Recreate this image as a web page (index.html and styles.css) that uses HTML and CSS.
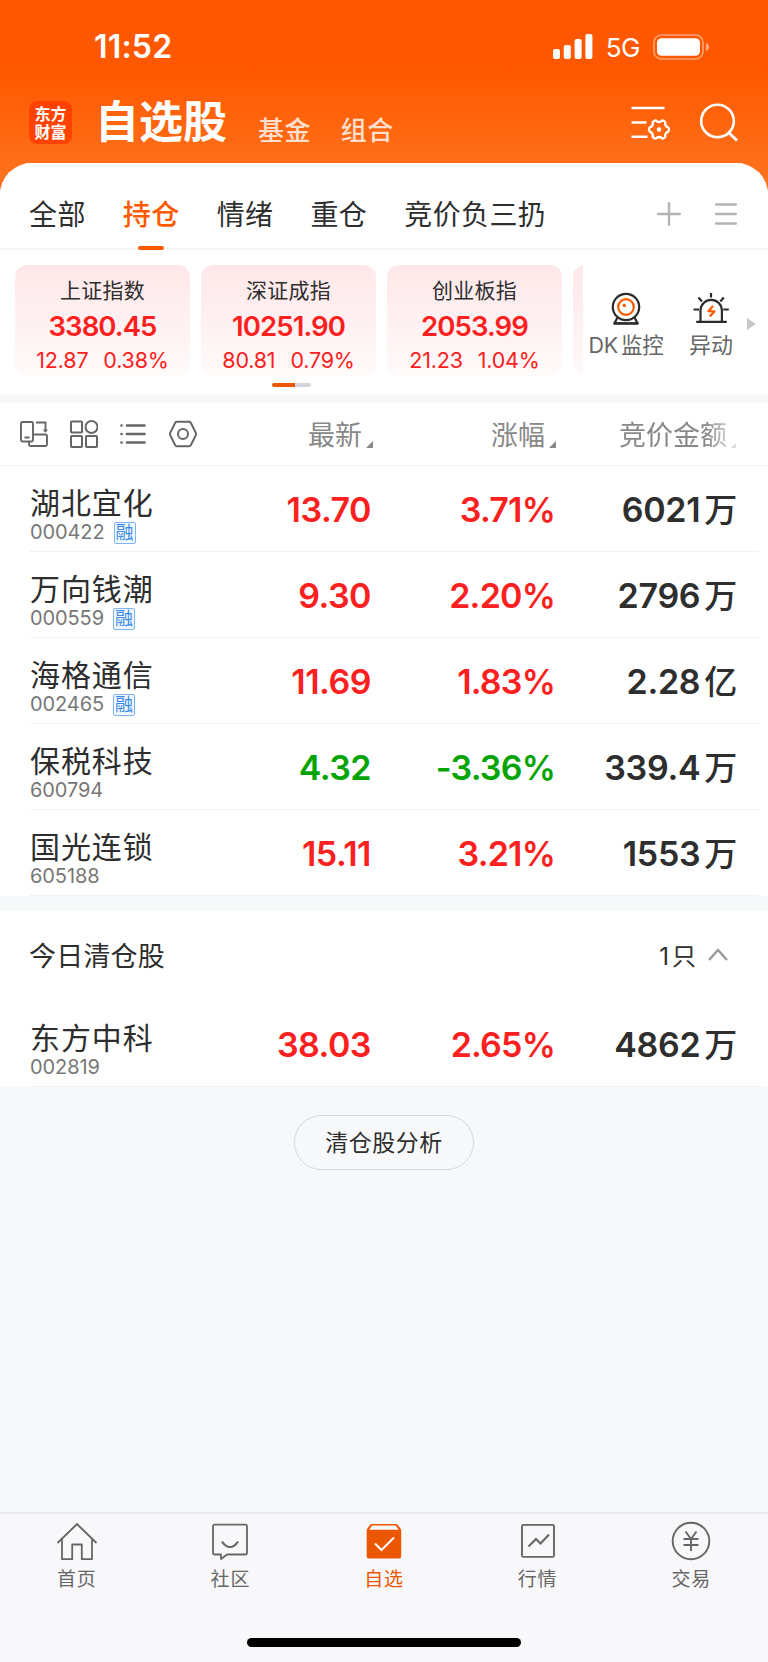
FILE: index.html
```html
<!DOCTYPE html>
<html lang="zh-CN">
<head>
  <meta charset="UTF-8">
  <meta name="viewport" content="width=device-width, initial-scale=1.0">
  <title>自选股</title>
  <link rel="stylesheet" href="styles.css">
</head>
<body>
  <header>
    <div class="status-bar">
      <span class="time">11:52</span>
      <div class="status-icons">
        <svg width="40" height="26" viewBox="0 0 40 26" fill="#fff">
          <rect x="0" y="15" width="7" height="10" rx="2"/>
          <rect x="10.8" y="11" width="7" height="14" rx="2"/>
          <rect x="21.6" y="5" width="7" height="20" rx="2"/>
          <rect x="32.4" y="0" width="7" height="25" rx="2"/>
        </svg>
        <span class="network">5G</span>
        <svg width="57" height="26" viewBox="0 0 57 26">
          <rect x="1" y="1" width="49" height="24" rx="7.5" fill="none" stroke="#fff" stroke-opacity=".45" stroke-width="1.6"/>
          <rect x="4" y="4.300" width="43" height="17.500" rx="4.500" fill="#fff"/>
          <path d="M53 9q3 1 3 4t-3 4z" fill="#fff" fill-opacity=".5"/>
        </svg>
      </div>
    </div>
    <div class="title-bar">
      <div class="logo"><span>东方</span><span>财富</span></div>
      <h1 class="title">自选股</h1>
      <a class="sub-title">基金</a>
      <a class="sub-title">组合</a>
      <div class="header-buttons">
        <svg width="39" height="36" viewBox="0 0 39 36" fill="none" stroke="#fff" stroke-width="2.600">
          <path d="M.5 4h33M.5 18.500h15M.5 32.700h16"/>
          <path d="M23.500 16.800q1.300-.8 2.200.4 2.300 1.600 4.600 0 .9-1.200 2.200-.4l1.300.8q.9.700.4 2 .2 2.800 2.600 3.600 1.100.4 1.100 2.300t-1.100 2.300q-2.400.8-2.600 3.600.5 1.300-.4 2l-1.300.8q-1.300.8-2.200-.4-2.300-1.600-4.600 0-.9 1.200-2.200.4l-1.300-.8q-.9-.7-.4-2-.2-2.800-2.600-3.600-1.100-.4-1.100-2.300t1.100-2.300q2.400-.8 2.600-3.600-.5-1.300.4-2z" stroke-width="2.300"/>
          <circle cx="28" cy="25.500" r="2.300" fill="#fff" stroke="none"/>
        </svg>
        <svg width="40" height="40" viewBox="0 0 40 40" fill="none" stroke="#fff" stroke-width="2.600">
          <circle cx="18.500" cy="19" r="16.300"/>
          <path d="M29.500 30.500l8.500 8" stroke-width="3"/>
        </svg>
      </div>
    </div>
  </header>

  <main>
    <nav class="tabs">
      <a class="tab">全部</a>
      <a class="tab active">持仓</a>
      <a class="tab">情绪</a>
      <a class="tab">重仓</a>
      <a class="tab">竞价负三扔</a>
      <div class="tab-buttons">
        <svg width="24" height="24" viewBox="0 0 24 24" stroke="#b3b3b3" stroke-width="2.400" stroke-linecap="round"><path d="M12 1.200v21.600M1.200 12h21.600"/></svg>
        <svg width="22" height="24" viewBox="0 0 22 24" stroke="#b3b3b3" stroke-width="2.400" stroke-linecap="round"><path d="M1.200 2.500h19.600M1.200 12h19.600M1.200 21.500h19.600"/></svg>
      </div>
    </nav>

    <section class="market">
      <div class="index-list">
        <div class="index-card">
          <div class="index-name">上证指数</div>
          <div class="index-value">3380.45</div>
          <div class="index-change"><span>12.87</span><span>0.38%</span></div>
        </div>
        <div class="index-card">
          <div class="index-name">深证成指</div>
          <div class="index-value">10251.90</div>
          <div class="index-change"><span>80.81</span><span>0.79%</span></div>
        </div>
        <div class="index-card">
          <div class="index-name">创业板指</div>
          <div class="index-value">2053.99</div>
          <div class="index-change"><span>21.23</span><span>1.04%</span></div>
        </div>
        <div class="index-card"></div>
      </div>
      <div class="tools">
        <div class="tool tool-dk">
          <svg width="36" height="34" viewBox="0 0 36 34" fill="none" stroke="#2b2b2b" stroke-width="2.200">
            <circle cx="18" cy="15" r="13.200"/>
            <path d="M9.500 25.500l-3 5.800h23l-3-5.800" stroke-linejoin="round"/>
            <path d="M5.500 31.500h25"/>
            <circle cx="18" cy="15" r="7.800" stroke="#ff5a00"/>
            <circle cx="16.300" cy="13.500" r="1.700" fill="#ff5a00" stroke="none"/>
          </svg>
          <span>DK 监控</span>
        </div>
        <div class="tool tool-move">
          <svg width="36" height="34" viewBox="0 0 36 34" fill="none" stroke="#2b2b2b" stroke-width="2.200">
            <path d="M7.500 29.500V18.500a10.700 10.700 0 0 1 21.400 0v11"/>
            <path d="M4 29.800h29" stroke-linecap="round"/>
            <path d="M18 5.500V1M9 9.500L5.500 5.500M27.300 9.500l3.500-4M6 17.500H.5M30.300 17.500h5.500"/>
            <path d="M20 14l-4.600 5.200 6 .2-4.600 5.200" stroke="#ff5a00" stroke-linejoin="round"/>
          </svg>
          <span>异动</span>
        </div>
        <span class="more-arrow"></span>
      </div>
      <div class="pager"><span></span></div>
    </section>

    <section class="stocks">
      <div class="list-header">
        <div class="view-buttons">
          <svg width="28" height="28" viewBox="0 0 28 28" fill="none" stroke="#666" stroke-width="1.900">
            <rect x="1" y="2" width="12" height="19.500" rx="1.500"/>
            <path d="M4.500 17.500h5M16 2.500h9.500v9M13 14.500h12.500a1.500 1.500 0 0 1 1.500 1.500v8.500a1.500 1.500 0 0 1-1.500 1.500h-15A1.500 1.500 0 0 1 9 24.500v-3"/>
            <path d="M22.800 9.500h5.200l-2.600 3.300z" fill="#666" stroke="none"/>
          </svg>
          <svg width="28" height="28" viewBox="0 0 28 28" fill="none" stroke="#666" stroke-width="2">
            <rect x="1" y="1.500" width="11" height="11" rx=".8"/>
            <circle cx="21.500" cy="7" r="6"/>
            <rect x="1" y="16" width="11" height="11" rx=".8"/>
            <rect x="16" y="16" width="11" height="11" rx=".8"/>
          </svg>
          <svg width="28" height="28" viewBox="0 0 28 28" fill="none" stroke="#666" stroke-width="2.600" stroke-linecap="round">
            <path d="M8 5.500h17.500M8 14h17.500M8 22.500h17.500M2.500 5.500h.1M2.500 14h.1M2.500 22.500h.1"/>
          </svg>
          <svg width="28" height="28" viewBox="0 0 28 28" fill="none" stroke="#666" stroke-width="2">
            <path d="M8 1.800h12q1.200 0 1.800 1l5 10q.5 1.200 0 2.400l-5 10q-.6 1-1.800 1H8q-1.200 0-1.800-1l-5-10q-.5-1.200 0-2.400l5-10q.6-1 1.800-1z"/>
            <circle cx="14" cy="14" r="5"/>
          </svg>
        </div>
        <div class="col col-price">最新<i class="sort"></i></div>
        <div class="col col-rate">涨幅<i class="sort"></i></div>
        <div class="col col-amount fade">竞价金额<i class="sort"></i></div>
      </div>

      <div class="stock">
        <div class="stock-info">
          <div class="stock-name">湖北宜化</div>
          <div class="stock-code">000422<span class="tag">融</span></div>
        </div>
        <div class="col-price up">13.70</div>
        <div class="col-rate up">3.71%</div>
        <div class="col-amount">6021<span class="unit">万</span></div>
      </div>
      <div class="stock">
        <div class="stock-info">
          <div class="stock-name">万向钱潮</div>
          <div class="stock-code">000559<span class="tag">融</span></div>
        </div>
        <div class="col-price up">9.30</div>
        <div class="col-rate up">2.20%</div>
        <div class="col-amount">2796<span class="unit">万</span></div>
      </div>
      <div class="stock">
        <div class="stock-info">
          <div class="stock-name">海格通信</div>
          <div class="stock-code">002465<span class="tag">融</span></div>
        </div>
        <div class="col-price up">11.69</div>
        <div class="col-rate up">1.83%</div>
        <div class="col-amount">2.28<span class="unit">亿</span></div>
      </div>
      <div class="stock">
        <div class="stock-info">
          <div class="stock-name">保税科技</div>
          <div class="stock-code">600794</div>
        </div>
        <div class="col-price down">4.32</div>
        <div class="col-rate down">-3.36%</div>
        <div class="col-amount">339.4<span class="unit">万</span></div>
      </div>
      <div class="stock">
        <div class="stock-info">
          <div class="stock-name">国光连锁</div>
          <div class="stock-code">605188</div>
        </div>
        <div class="col-price up">15.11</div>
        <div class="col-rate up">3.21%</div>
        <div class="col-amount">1553<span class="unit">万</span></div>
      </div>
    </section>

    <section class="cleared">
      <div class="cleared-header">
        <h2>今日清仓股</h2>
        <span class="count">1<span>只</span></span>
        <svg width="20" height="13" viewBox="0 0 20 13" fill="none" stroke="#999" stroke-width="2.400"><path d="M1 12l9-10 9 10"/></svg>
      </div>
      <div class="stock">
        <div class="stock-info">
          <div class="stock-name">东方中科</div>
          <div class="stock-code">002819</div>
        </div>
        <div class="col-price up">38.03</div>
        <div class="col-rate up">2.65%</div>
        <div class="col-amount">4862<span class="unit">万</span></div>
      </div>
    </section>

    <div class="analysis">
      <button class="analysis-button">清仓股分析</button>
    </div>
  </main>

  <footer>
    <nav class="bottom-nav">
      <a class="nav-item">
        <svg width="42" height="40" viewBox="0 0 42 40" fill="none" stroke="#666" stroke-width="1.800" stroke-linejoin="round">
          <path d="M1.500 22L21 3l19.500 19M6 18v20.200h10.200V23.500h9.600v14.700H36V18"/>
        </svg>
        <span>首页</span>
      </a>
      <a class="nav-item">
        <svg width="42" height="40" viewBox="0 0 42 40" fill="none" stroke="#666" stroke-width="1.800" stroke-linejoin="round">
          <path d="M5.500 3.700h31a1.500 1.500 0 0 1 1.500 1.500V32a1.500 1.500 0 0 1-1.500 1.500H18L12 38v-4.500H5.500A1.500 1.500 0 0 1 4 32V5.200a1.500 1.500 0 0 1 1.500-1.500z"/>
          <path d="M13 20.500q3.500 5.500 8 5.500t8-5.500" stroke-width="2.200"/>
        </svg>
        <span>社区</span>
      </a>
      <a class="nav-item active">
        <svg width="42" height="40" viewBox="0 0 42 40">
          <path d="M8.500 3h24.500q1 0 1.600.8l3 4q.6.800.6 1.800V35q0 2.500-2.500 2.500H6.200q-2.500 0-2.500-2.500V9.600q0-1 .6-1.800l2.800-4q.6-.8 1.400-.8z" fill="#eb5600"/>
          <path d="M9 4.500h23.700l3 4.200H6.200z" fill="#f8f8fa"/>
          <path d="M12 22.500l6.500 6.500 12.500-12.500" fill="none" stroke="#fff" stroke-width="2"/>
        </svg>
        <span>自选</span>
      </a>
      <a class="nav-item">
        <svg width="42" height="40" viewBox="0 0 42 40" fill="none" stroke="#666" stroke-width="1.900">
          <rect x="5" y="3.900" width="32" height="32" rx="1.500"/>
          <path d="M11.500 25.500l7.500-7.500 4.500 4.500 8.500-9" stroke-width="2.100"/>
        </svg>
        <span>行情</span>
      </a>
      <a class="nav-item">
        <svg width="42" height="40" viewBox="0 0 42 40" fill="none" stroke="#666" stroke-width="1.900">
          <circle cx="21" cy="20" r="18.300"/>
          <path d="M15.500 10.500l5.500 7.500 5.500-7.500M21 18v12M13.500 18h15M13.500 24h15"/>
        </svg>
        <span>交易</span>
      </a>
    </nav>
    <div class="home-bar"></div>
  </footer>
</body>
</html>
```

FILE: styles.css
```css
* {
  box-sizing: border-box;
}

body {
  margin: 0;
  width: 768px;
  height: 1662px;
  display: flex;
  flex-direction: column;
  overflow: hidden;
  background: linear-gradient(#ff5800 0, #ff5800 70px, #ff711c 175px, #ff7520 205px, #f7f8fa 205px);
  color: #2e2e2e;
  font-family: Inter, "Noto Sans CJK SC", sans-serif;
}

h1, h2 {
  margin: 0;
  font-weight: normal;
}

svg {
  display: block;
  flex: none;
}

header {
  height: 163px;
  color: #fff;
}

.status-bar {
  height: 83px;
  padding: 10px 58px 0 94px;
  display: flex;
  align-items: center;
  justify-content: space-between;
}

.time {
  font-size: 32px;
  font-weight: 600;
  letter-spacing: 0.2px;
}

.status-icons {
  display: flex;
  align-items: center;
}

.network {
  margin: 3px 13px 0 13px;
  font-size: 26px;
  font-weight: 400;
  line-height: 26px;
  letter-spacing: -0.5px;
}

.title-bar {
  height: 80px;
  padding: 0 29px 0 29px;
  display: flex;
  align-items: center;
}

.logo {
  width: 43px;
  height: 43px;
  margin-top: -1px;
  border-radius: 8px;
  background: #ff4200;
  display: flex;
  flex-direction: column;
  align-items: center;
  justify-content: center;
  font-size: 16px;
  font-weight: 700;
  line-height: 18px;
}

.title {
  margin: -3px 0 0 23px;
  font-size: 44px;
  font-weight: 700;
  line-height: 60px;
}

.sub-title {
  margin: 15px 0 0 31px;
  font-size: 26px;
  font-weight: 500;
  line-height: 36px;
  letter-spacing: 0.4px;
  color: #ffdfcd;
}

.sub-title + .sub-title {
  margin-left: 30px;
}

.header-buttons {
  margin: -2px 0 0 auto;
  display: flex;
  align-items: center;
  gap: 29px;
}

main {
  flex: 1;
  border-radius: 32px 32px 0 0;
  overflow: hidden;
  background: #f7f8fa;
}

.tabs {
  height: 87px;
  padding: 0 31px 0 29px;
  display: flex;
  gap: 37px;
  border-bottom: 2px solid #f5f5f6;
  background: #fff;
}

.tab {
  height: 87px;
  padding-top: 29px;
  display: flex;
  flex-direction: column;
  align-items: center;
  justify-content: space-between;
  font-size: 28px;
  line-height: 46px;
  letter-spacing: 0.4px;
}

.tab.active {
  color: #ff5a00;
  font-weight: 500;
}

.tab.active::after {
  content: "";
  width: 26px;
  height: 4px;
  border-radius: 2px;
  background: #ff5a00;
}

.tab-buttons {
  margin-left: auto;
  padding-top: 17px;
  display: flex;
  align-items: center;
  gap: 34px;
}

.market {
  height: 144px;
  padding: 15px 0 0 15px;
  display: grid;
  grid-template-columns: 568px 1fr;
  grid-template-rows: 111px 1fr;
  background: #fff;
}

.index-list {
  display: flex;
  gap: 11px;
  overflow: hidden;
}

.index-card {
  flex: none;
  width: 175px;
  height: 111px;
  padding-top: 11px;
  border-radius: 12px;
  background: linear-gradient(#ffe7e9, #fffafa);
  text-align: center;
  color: #fc2020;
}

.index-name {
  font-size: 21px;
  line-height: 30px;
  letter-spacing: 0.3px;
}

.index-name {
  color: #2e2e2e;
}

.index-value {
  margin-top: 4px;
  font-size: 27.5px;
  font-weight: 600;
  line-height: 32px;
  letter-spacing: -0.9px;
}

.index-change {
  margin-top: 4px;
  display: flex;
  justify-content: center;
  gap: 15px;
  font-size: 21.5px;
  line-height: 28px;
  letter-spacing: -0.2px;
}

.tools {
  display: flex;
  padding-top: 27px;
}

.tool {
  width: 84px;
  display: flex;
  flex-direction: column;
  align-items: center;
  gap: 3px;
  font-size: 22px;
  line-height: 32px;
  white-space: nowrap;
  color: #666;
}

.tool-dk {
  font-size: 21.5px;
  letter-spacing: -0.2px;
  word-spacing: -3px;
}

.tool-dk,
.tool-move {
  margin-left: 1px;
}

.more-arrow {
  margin: 26px 0 0 -6px;
  height: 12px;
  border-left: 9px solid #c8c8c8;
  border-top: 6px solid transparent;
  border-bottom: 6px solid transparent;
}

.pager {
  width: 39px;
  height: 4px;
  margin: 7px 0 0 257px;
  border-radius: 2px;
  overflow: hidden;
  background: #d3d5db;
}

.pager span {
  display: block;
  width: 23px;
  height: 4px;
  background: #eb5600;
}

.stocks {
  margin-top: 9px;
  background: #fff;
}

.list-header {
  height: 63px;
  padding-left: 20px;
  display: flex;
  align-items: center;
  border-bottom: 1px solid #f1f1f2;
}

.view-buttons {
  width: 200px;
  display: flex;
  gap: 21.5px;
}

.col {
  padding-top: 3px;
  display: flex;
  justify-content: flex-end;
  align-items: center;
  font-size: 27px;
  line-height: 40px;
  color: #888;
}

.sort {
  margin: 17px -2px 0 4px;
  border-left: 7px solid transparent;
  border-bottom: 7px solid #888;
}

.col-price {
  width: 151px;
}

.col-rate {
  width: 183px;
}

.col-amount {
  width: 182px;
}

.fade {
  -webkit-mask-image: linear-gradient(to right, #000 83%, rgba(0, 0, 0, 0.25) 100%);
  mask-image: linear-gradient(to right, #000 83%, rgba(0, 0, 0, 0.25) 100%);
}

.stock {
  height: 86px;
  margin: 0 9px 0 30px;
  display: flex;
  border-bottom: 1px solid #f1f1f2;
  line-height: 87px;
  font-size: 34px;
  font-weight: 600;
  letter-spacing: -0.5px;
  text-align: right;
}

.stock .col-rate {
  width: 184px;
  letter-spacing: -0.8px;
}

.stock .col-amount {
  letter-spacing: -0.3px;
}

.stock-info {
  width: 190px;
  padding-top: 16px;
  text-align: left;
  font-weight: 400;
}

.stock-name {
  font-size: 30px;
  line-height: 42px;
  letter-spacing: 0.9px;
}

.stock-code {
  height: 17px;
  display: flex;
  align-items: center;
  font-size: 20px;
  line-height: 17px;
  letter-spacing: -0.1px;
  color: #777;
}

.tag {
  width: 22px;
  height: 22px;
  margin-left: 9px;
  border: 1.5px solid #7fb4f0;
  border-radius: 2px;
  background: #f2f8ff;
  font-size: 18px;
  line-height: 20px;
  letter-spacing: 0;
  text-align: center;
  color: #3b8be6;
}

.unit {
  margin-left: 4px;
  font-size: 33px;
  font-weight: 500;
  line-height: 1;
}

.up {
  color: #fc2020;
}

.down {
  color: #04a404;
}

.cleared {
  margin-top: 15px;
  background: #fff;
}

.cleared-header {
  height: 90px;
  padding: 0 40px 4px 29px;
  display: flex;
  align-items: center;
}

.cleared-header h2 {
  flex: 1;
  font-size: 27px;
  letter-spacing: 0.2px;
}

.count {
  margin-right: 12px;
  font-size: 24px;
}

.count span {
  margin-left: 3px;
}

.analysis {
  padding-top: 28px;
  text-align: center;
}

.analysis-button {
  width: 180px;
  height: 55px;
  padding: 0 0 4px;
  border: 1.5px solid #d6d7d9;
  border-radius: 28px;
  background: transparent;
  color: #2e2e2e;
  font-family: inherit;
  font-size: 23px;
  letter-spacing: 0.5px;
}

footer {
  height: 150px;
  border-top: 2px solid #ececee;
  background: #f8f8fa;
}

.bottom-nav {
  height: 124px;
  padding-top: 7px;
  display: grid;
  grid-template-columns: repeat(5, 1fr);
}

.nav-item {
  display: flex;
  flex-direction: column;
  align-items: center;
  gap: 4px;
  font-size: 19px;
  line-height: 30px;
  letter-spacing: 0.8px;
  color: #666;
}

.nav-item.active {
  color: #eb5600;
}

.home-bar {
  width: 274px;
  height: 9px;
  margin: 0 auto;
  border-radius: 5px;
  background: #000;
}
```
